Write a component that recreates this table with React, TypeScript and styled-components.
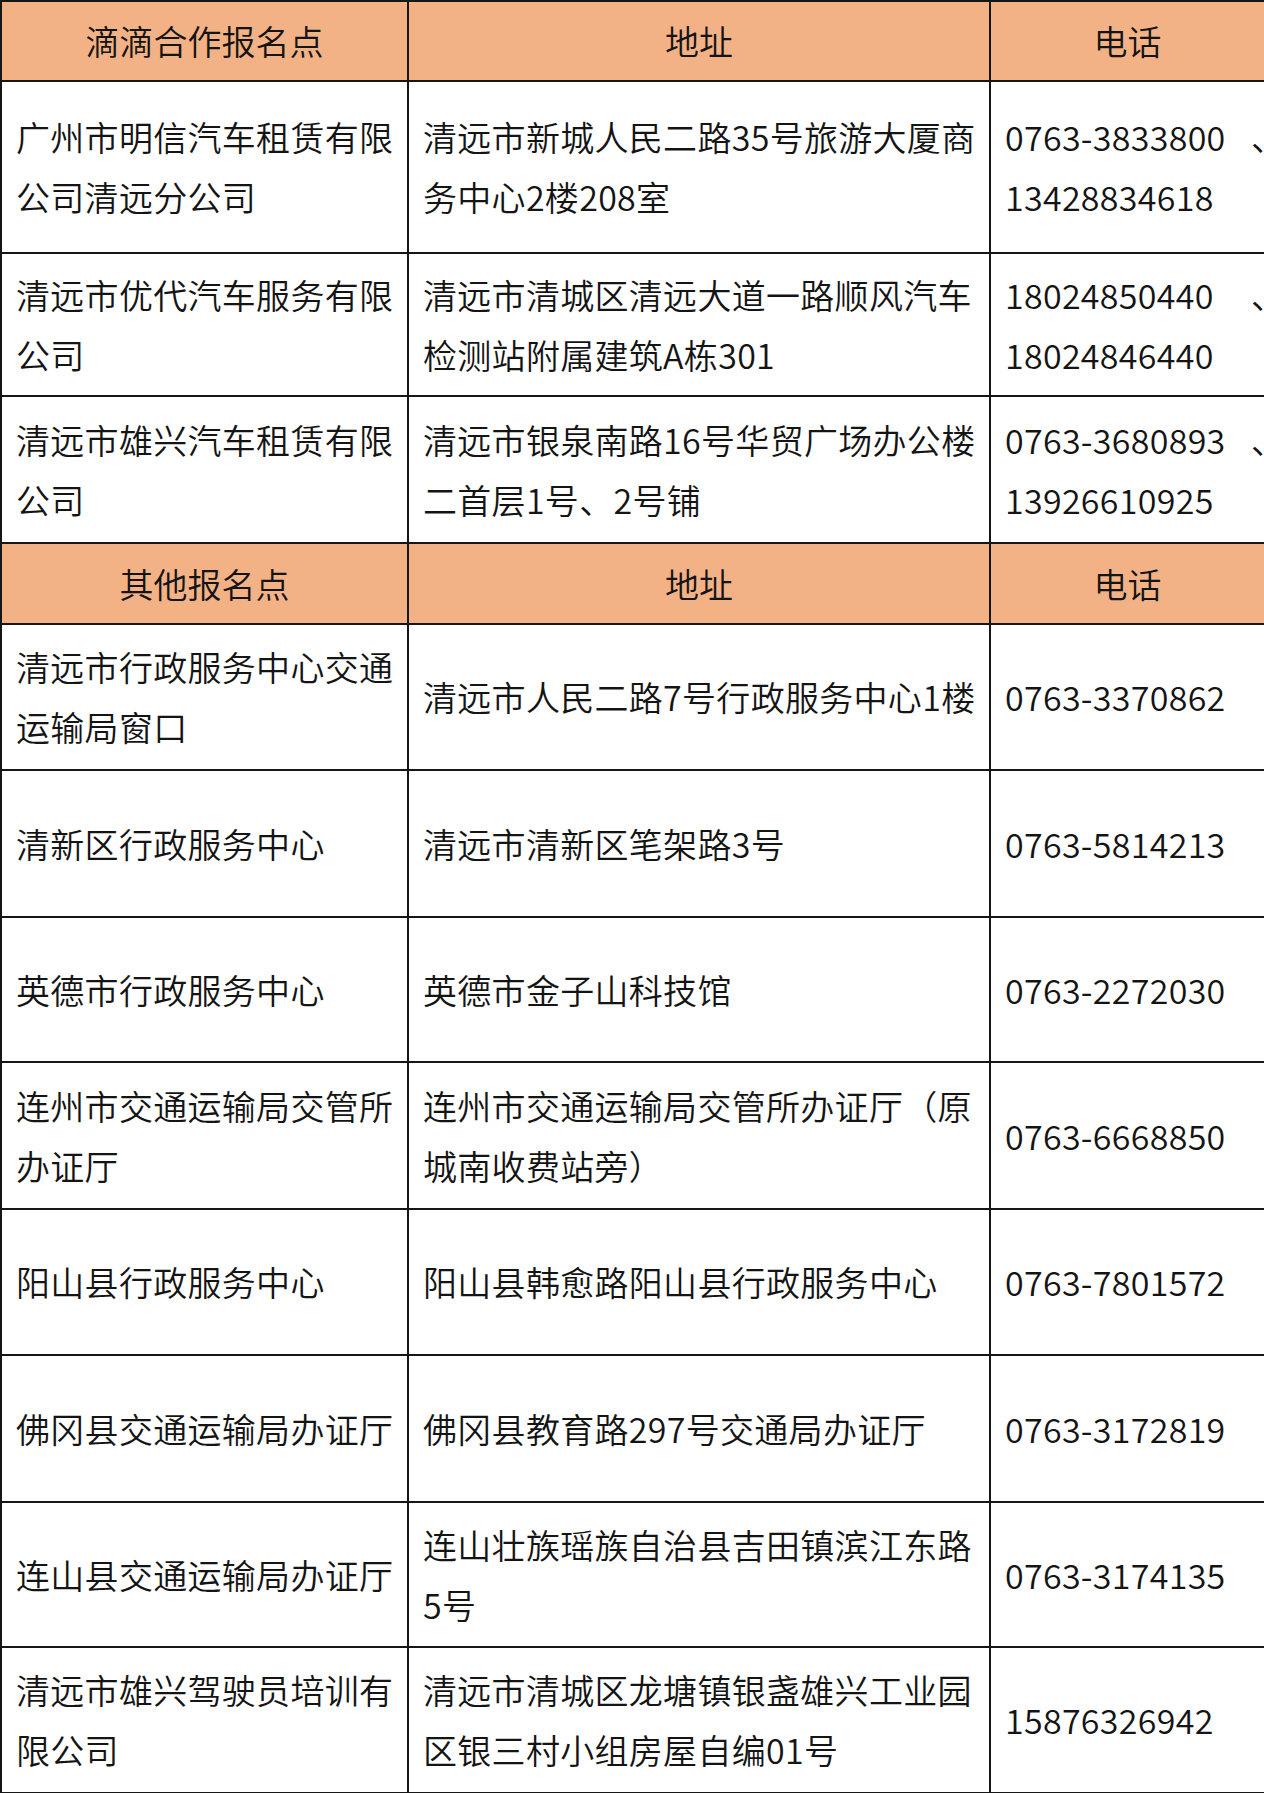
import styled, { createGlobalStyle } from 'styled-components';

const GlobalStyle = createGlobalStyle`
	html,
	body {
		margin: 0;
		padding: 0;
		background: #fff;
	}

	body {
		font-family: 'Noto Sans CJK SC', 'Noto Sans', sans-serif;
		font-weight: 350;
		color: #141414;
	}
`;

const Page = styled.div`
	width: 1264px;
	overflow: hidden;
`;

const Table = styled.table`
	width: 1264px;
	border-collapse: collapse;
	table-layout: fixed;
`;

const HeadCell = styled.th`
	background-color: #f3b286;
	border: 2px solid #161616;
	font-size: 34px;
	font-weight: 350;
	line-height: 60px;
	text-align: center;
	padding: 0 14px;
`;

const Cell = styled.td`
	border: 2px solid #161616;
	font-size: 34px;
	line-height: 60px;
	letter-spacing: 0.3px;
	padding: 0 14px;
	vertical-align: middle;
	white-space: nowrap;
	overflow: visible;
`;

const Line = styled.div`
	white-space: nowrap;
`;

const PhoneLine = styled.div`
	display: flex;
	justify-content: space-between;
	width: 258px;
	white-space: nowrap;
`;

const Comma = styled.span`
	display: inline-block;
	width: 12px;
	letter-spacing: -22px;
`;

type Row = {
	name: string[];
	addr: string[];
	phone: string[];
	height: number;
};

const partnerRows: Row[] = [
	{
		name: ['广州市明信汽车租赁有限', '公司清远分公司'],
		addr: ['清远市新城人民二路35号旅游大厦商', '务中心2楼208室'],
		phone: ['0763-3833800', '13428834618'],
		height: 172,
	},
	{
		name: ['清远市优代汽车服务有限', '公司'],
		addr: ['清远市清城区清远大道一路顺风汽车', '检测站附属建筑A栋301'],
		phone: ['18024850440', '18024846440'],
		height: 143,
	},
	{
		name: ['清远市雄兴汽车租赁有限', '公司'],
		addr: ['清远市银泉南路16号华贸广场办公楼', '二首层1号、2号铺'],
		phone: ['0763-3680893', '13926610925'],
		height: 147,
	},
];

const otherRows: Row[] = [
	{
		name: ['清远市行政服务中心交通', '运输局窗口'],
		addr: ['清远市人民二路7号行政服务中心1楼'],
		phone: ['0763-3370862'],
		height: 146,
	},
	{
		name: ['清新区行政服务中心'],
		addr: ['清远市清新区笔架路3号'],
		phone: ['0763-5814213'],
		height: 147,
	},
	{
		name: ['英德市行政服务中心'],
		addr: ['英德市金子山科技馆'],
		phone: ['0763-2272030'],
		height: 145,
	},
	{
		name: ['连州市交通运输局交管所', '办证厅'],
		addr: ['连州市交通运输局交管所办证厅（原', '城南收费站旁）'],
		phone: ['0763-6668850'],
		height: 147,
	},
	{
		name: ['阳山县行政服务中心'],
		addr: ['阳山县韩愈路阳山县行政服务中心'],
		phone: ['0763-7801572'],
		height: 146,
	},
	{
		name: ['佛冈县交通运输局办证厅'],
		addr: ['佛冈县教育路297号交通局办证厅'],
		phone: ['0763-3172819'],
		height: 147,
	},
	{
		name: ['连山县交通运输局办证厅'],
		addr: ['连山壮族瑶族自治县吉田镇滨江东路', '5号'],
		phone: ['0763-3174135'],
		height: 145,
	},
	{
		name: ['清远市雄兴驾驶员培训有', '限公司'],
		addr: ['清远市清城区龙塘镇银盏雄兴工业园', '区银三村小组房屋自编01号'],
		phone: ['15876326942'],
		height: 146,
	},
];

function Lines({ items }: { items: string[] }) {
	return (
		<>
			{items.map((t) => (
				<Line key={t}>{t}</Line>
			))}
		</>
	);
}

function Phones({ items }: { items: string[] }) {
	if (items.length < 2) return <Lines items={items} />;
	return (
		<>
			<PhoneLine>
				<span>{items[0]}</span>
				<Comma>、</Comma>
			</PhoneLine>
			<Line>{items[1]}</Line>
		</>
	);
}

function HeaderRow({ title, height }: { title: string; height: number }) {
	return (
		<tr style={{ height }}>
			<HeadCell>{title}</HeadCell>
			<HeadCell>地址</HeadCell>
			<HeadCell>电话</HeadCell>
		</tr>
	);
}

function BodyRow({ row }: { row: Row }) {
	return (
		<tr style={{ height: row.height }}>
			<Cell>
				<Lines items={row.name} />
			</Cell>
			<Cell>
				<Lines items={row.addr} />
			</Cell>
			<Cell>
				<Phones items={row.phone} />
			</Cell>
		</tr>
	);
}

export default function App() {
	return (
		<Page>
			<GlobalStyle />
			<Table>
				<colgroup>
					<col style={{ width: 407 }} />
					<col style={{ width: 582 }} />
					<col style={{ width: 275 }} />
				</colgroup>
				<tbody>
					<HeaderRow title='滴滴合作报名点' height={80} />
					{partnerRows.map((r) => (
						<BodyRow key={r.name.join('')} row={r} />
					))}
					<HeaderRow title='其他报名点' height={81} />
					{otherRows.map((r) => (
						<BodyRow key={r.name.join('')} row={r} />
					))}
				</tbody>
			</Table>
		</Page>
	);
}
